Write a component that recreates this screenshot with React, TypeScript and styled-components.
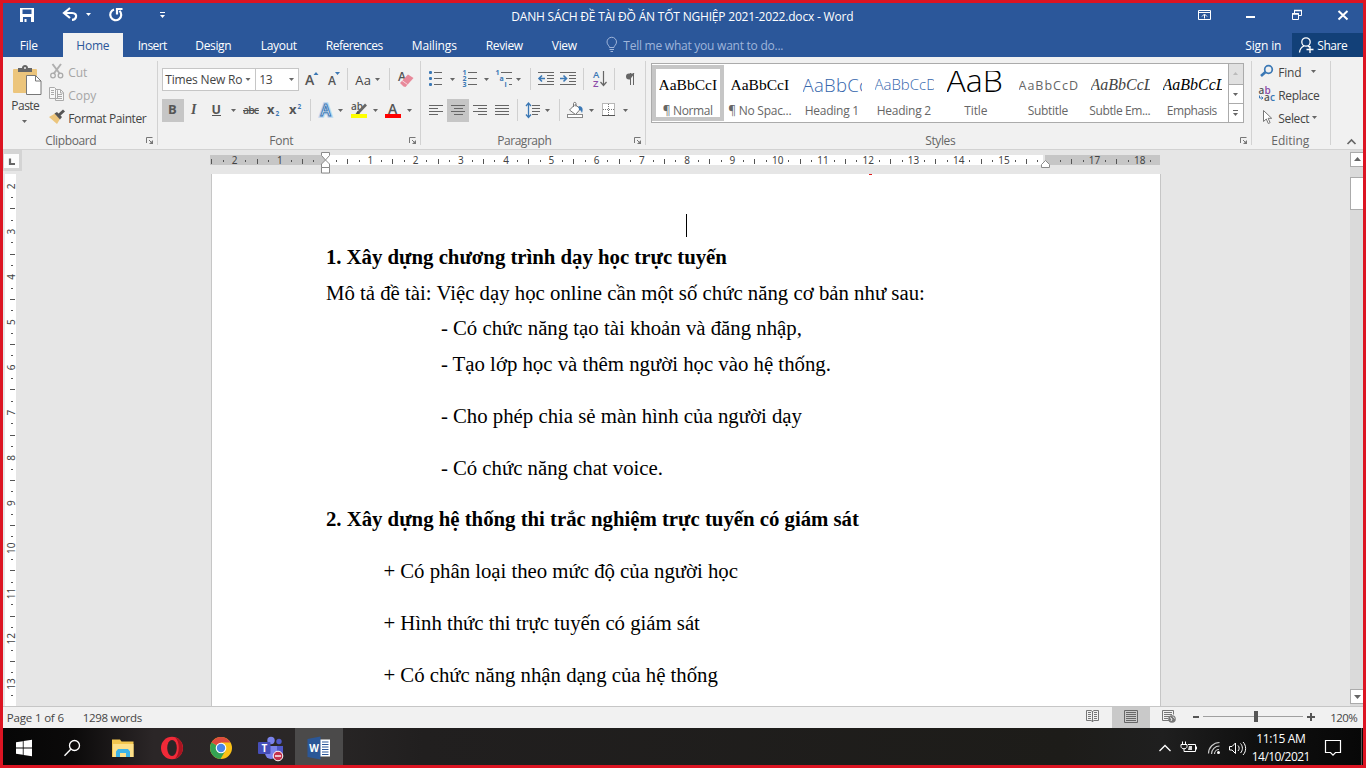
import React, { useLayoutEffect, useRef, useState } from "react";
import styled, { createGlobalStyle, css } from "styled-components";

const ui = `"Open Sans", "Noto Sans", sans-serif`;
const serif = `"Liberation Serif", serif`;
const GRAY = "#666";
const BLUE = "#3b78b5";

const Global = createGlobalStyle`
  * { box-sizing: border-box; }
  body { margin: 0; overflow: hidden; }
  svg { display: block; flex: none; overflow: visible; }
`;

const Screen = styled.div`
  width: 1366px;
  height: 768px;
  border: 3px solid #dc1422;
  display: flex;
  flex-direction: column;
  background: #e6e6e6;
  font: 12px ${ui};
  color: #444;
  overflow: hidden;
`;

/* ---------- shared parts ---------- */

type TextProps = {
  $w: number;
  $size?: number;
  $color?: string;
  $weight?: number;
  $family?: string;
  $italic?: boolean;
  $ml?: number;
};
const TextBox = styled.span<TextProps>`
  display: block;
  flex: none;
  width: ${(p) => p.$w}px;
  margin-left: ${(p) => p.$ml ?? 0}px;
  padding-left: 0.3px;
  white-space: pre;
  font-size: ${(p) => p.$size ?? 12}px;
  font-family: ${(p) => p.$family ?? ui};
  font-weight: ${(p) => p.$weight ?? 400};
  font-style: ${(p) => (p.$italic ? "italic" : "normal")};
  color: ${(p) => p.$color ?? "inherit"};
`;

/* A single line of text tracked so that it fills a known width. */
function Fit({ children, ...box }: TextProps & { children: string }) {
  const ref = useRef<HTMLSpanElement>(null);
  const [gap, setGap] = useState(0);
  useLayoutEffect(() => {
    if (!ref.current) return;
    ref.current.style.letterSpacing = "0px";
    const natural = ref.current.getBoundingClientRect().width;
    setGap((box.$w - 1 - natural) / children.length);
  }, [children, box.$w]);
  return (
    <TextBox {...box}>
      <span ref={ref} style={{ letterSpacing: `${gap.toFixed(3)}px` }}>{children}</span>
    </TextBox>
  );
}

type GProps = { x: number; y: number; w: number; h: number; children?: React.ReactNode };
function Glyph({ x, y, w, h, children }: GProps) {
  return (
    <svg width={w} height={h} viewBox={`${x} ${y} ${w} ${h}`} fill="none">
      {children}
    </svg>
  );
}

const Arrow = ({ x, y, c = GRAY }: { x: number; y: number; c?: string }) => (
  <path d={`M${x} ${y}h5l-2.5 3z`} fill={c} />
);
const Sep = ({ x, y }: { x: number; y: number }) => <path d={`M${x}.5 ${y}v22`} stroke="#d0d0d0" />;

const Spacer = styled.div`flex: 1;`;

/* ---------- title bar and tabs ---------- */

const TitleBar = styled.header`
  display: flex;
  align-items: center;
  height: 30px;
  flex: none;
  background: #2b579a;
  color: #fff;
`;
const TitleText = styled.div`
  display: flex;
  align-items: center;
  align-self: flex-start;
  height: 27px;
`;
const TabBar = styled.nav`
  display: flex;
  height: 24px;
  flex: none;
  background: #2b579a;
  color: #fff;
  align-items: stretch;
`;
const Tab = styled.div<{ $w: number; $active?: boolean; $mr?: number }>`
  width: ${(p) => p.$w}px;
  margin-right: ${(p) => p.$mr ?? 0}px;
  display: flex;
  flex: none;
  align-items: center;
  justify-content: center;
  ${(p) => p.$active && css`background: #f1f1f1; color: #2b579a;`}
`;
const ShareButton = styled.div`
  width: 71px;
  display: flex;
  align-items: center;
  background: #124078;
`;

/* ---------- ribbon ---------- */

const Ribbon = styled.section`
  display: flex;
  flex: none;
  height: 93px;
  padding-top: 4px;
  background: #f1f1f1;
  border-bottom: 1px solid #d2d2d2;
`;
const Group = styled.div<{ $w: number }>`
  width: ${(p) => p.$w}px;
  height: 88px;
  display: flex;
  flex: none;
  flex-direction: column;
`;
const Divider = styled.div`
  width: 1px;
  height: 84px;
  background: #d2d2d2;
`;
const GroupBody = styled.div<{ $column?: boolean; $pt?: number; $pl?: number; $gap?: number }>`
  height: 71px;
  display: flex;
  flex-direction: ${(p) => (p.$column ? "column" : "row")};
  padding-top: ${(p) => p.$pt ?? 0}px;
  padding-left: ${(p) => p.$pl ?? 0}px;
  gap: ${(p) => p.$gap ?? 0}px;
`;
const GroupFooter = styled.div`
  height: 18px;
  display: flex;
  align-items: center;
  color: #666;
`;
const Row = styled.div<{ $h?: number; $dim?: boolean }>`
  display: flex;
  flex: none;
  align-items: center;
  height: ${(p) => p.$h ?? 23}px;
  color: ${(p) => (p.$dim ? "#a6a6a6" : "#444")};
`;
const Column = styled.div`
  display: flex;
  flex-direction: column;
`;
const PasteButton = styled.div`
  width: 46px;
  display: flex;
  flex-direction: column;
`;
const Combo = styled.div<{ $w: number }>`
  width: ${(p) => p.$w}px;
  height: 23px;
  flex: none;
  display: flex;
  align-items: center;
  background: #fff;
  border: 1px solid #c6c6c6;
  & + & { border-left: 0; }
`;

const Gallery = styled.div`
  display: flex;
  width: 593px;
  height: 60px;
  border: 1px solid #ababab;
  background: #fff;
`;
const StyleCell = styled.div<{ $on?: boolean }>`
  width: 72px;
  height: 56px;
  margin-top: 1px;
  flex: none;
  border: 4px solid ${(p) => (p.$on ? "#c6c6c6" : "#fff")};
  padding: 2px 0 0 2px;
`;
const Preview = styled.div`
  width: 59px;
  height: 23px;
  margin: 0 0 8px 0.5px;
  overflow: hidden;
  display: flex;
  align-items: flex-end;
`;
const Sample = styled.span<{ $f: string; $s: number; $c: string; $lh: number; $i?: boolean; $wt?: number; $ls?: number }>`
  font: ${(p) => (p.$i ? "italic" : "normal")} ${(p) => p.$wt ?? 400} ${(p) => p.$s}px / ${(p) => p.$lh}px ${(p) => p.$f};
  letter-spacing: ${(p) => p.$ls ?? 0}px;
  color: ${(p) => p.$c};
  white-space: nowrap;
`;
const StyleName = styled.div`
  display: flex;
  justify-content: center;
  width: 60px;
  line-height: 17px;
  color: #666;
`;
const GalleryScroll = styled.div`
  display: flex;
  flex-direction: column;
  width: 15px;
  margin-left: auto;
  border-left: 1px solid #ababab;
`;
const ScrollCell = styled.div<{ $h: number; $off?: boolean }>`
  height: ${(p) => p.$h}px;
  background: ${(p) => (p.$off ? "#e1e1e1" : "#fff")};
  & + & { border-top: 1px solid #ababab; }
`;

/* ---------- work area ---------- */

const Work = styled.main`
  display: flex;
  height: 556px;
  flex: none;
`;
const LeftRail = styled.div`
  width: 208px;
  display: flex;
  flex-direction: column;
`;
const TabStop = styled.div`
  width: 19px;
  height: 21px;
  border: solid #d4d4d4;
  border-width: 4px 3px 3px 1px;
  background: #fcfcfc;
  margin-bottom: 3px;
`;
const Center = styled.div`
  width: 950px;
  display: flex;
  flex-direction: column;
`;
const Page = styled.article`
  position: relative;
  height: 532px;
  background: #fff;
  border: solid #c6c6c6;
  border-width: 0 1px;
  padding: 65px 0 0 113.6px;
  color: #000;
  overflow: hidden;
`;
const Line = styled.div<{ $indent?: number; $mt?: number }>`
  display: flex;
  height: 36px;
  line-height: 35.6px;
  padding-left: ${(p) => p.$indent ?? 0}px;
  margin-top: ${(p) => p.$mt ?? 0}px;
`;
const Caret = styled.div`
  position: absolute;
  left: 474px;
  top: 40px;
  width: 1px;
  height: 23px;
  background: #000;
`;
const RedMark = styled.div`
  position: absolute;
  left: 657px;
  top: 0;
  width: 3px;
  height: 1px;
  background: #e01b1b;
`;
const ScrollBar = styled.div`
  margin-left: auto;
  width: 13px;
  padding-top: 2px;
  display: flex;
  flex-direction: column;
  background: #dadada;
`;
const ScrollPart = styled.div<{ $h: number; $mt?: number }>`
  height: ${(p) => p.$h}px;
  margin-top: ${(p) => p.$mt ?? 0}px;
  background: #fff;
  border: 1px solid #ababab;
  border-right: 0;
`;
const ScrollEnd = styled.div`height: 2px;`;

/* ---------- status bar and taskbar ---------- */

const StatusBar = styled.footer`
  height: 22px;
  flex: none;
  display: flex;
  align-items: center;
  background: #f1f1f1;
  border-top: 1px solid #c6c6c6;
  font-size: 11px;
`;
const ViewButton = styled.div<{ $w: number; $on?: boolean }>`
  width: ${(p) => p.$w}px;
  background: ${(p) => (p.$on ? "#c9c9c9" : "transparent")};
`;
const Taskbar = styled.div`
  height: 37px;
  flex: none;
  display: flex;
  background: linear-gradient(90deg, #060606 0, #0b0a0a 70px, #2b2627 150px, #2a2727 300px, #211f1f 420px, #1d1c19 1060px, #1f1f1f 1160px, #101010 1250px, #070707 1360px);
  color: #fff;
`;
const TaskItem = styled.div<{ $w: number; $on?: boolean }>`
  width: ${(p) => p.$w}px;
  background: ${(p) => (p.$on ? "#4b4a4a" : "transparent")};
`;
const Clock = styled.div`
  width: 70px;
  display: flex;
  flex-direction: column;
  align-items: center;
  line-height: 18px;
  padding-top: 2px;
`;

/* ---------- rulers ---------- */

const STEP = 45.25;
function HorizontalRuler() {
  const marks: React.ReactNode[] = [];
  for (let q = -10; q <= 73; q++) {
    const exact = 325.2 + (q * STEP) / 4;
    const x = Math.round(exact - 0.6);
    if (q === 0 || q === 64) continue;
    if (q % 4 === 0) {
      marks.push(
        <text key={q} x={exact} y="164" textAnchor="middle" fontSize="10" fontFamily="Noto Sans, sans-serif" fill="#444">
          {Math.abs(q / 4)}
        </text>
      );
    } else if (q % 2 === 0) marks.push(<rect key={q} x={x} y="159" width="1" height="5" fill="#555" />);
    else marks.push(<rect key={q} x={x} y="160" width="1" height="2" fill="#555" />);
  }
  return (
    <Glyph x={211} y={150} w={950} h={24}>
      <rect x="210" y="155" width="950" height="10" fill="#c6c6c6" />
      <rect x="325" y="155" width="718" height="10" fill="#fff" />
      <rect x="1043" y="155" width="2" height="10" fill="#e6e6e6" />
      {marks}
      <path d="M321.5 152.5h8v3l-4 4.5-4-4.5zM321.5 167.5v-3.5l4-4 4 4v3.5zM321.5 167.5h8v5.5h-8z" fill="#fff" stroke="#8a8a8a" />
      <path d="M1041.500 167.500v-3l4-4 4 4v3z" fill="#fff" stroke="#8a8a8a" />
    </Glyph>
  );
}
function VerticalRuler() {
  const marks: React.ReactNode[] = [];
  for (let q = 0; q <= 45; q++) {
    const exact = 186.3 + (q * STEP) / 4;
    const y = Math.round(exact - 0.5);
    if (q % 4 === 0) {
      marks.push(
        <text key={q} transform={`translate(15 ${exact}) rotate(-90)`} textAnchor="middle" fontSize="10" fontFamily="Noto Sans, sans-serif" fill="#444">
          {q / 4 + 2}
        </text>
      );
    } else if (q % 2 === 0) marks.push(<rect key={q} x="10" y={y} width="5" height="1" fill="#555" />);
    else marks.push(<rect key={q} x="11" y={y} width="2" height="1" fill="#555" />);
  }
  return (
    <Glyph x={3} y={174} w={208} h={532}>
      <rect x="5" y="174" width="11" height="532" fill="#fff" />
      {marks}
    </Glyph>
  );
}

/* ---------- small drawings ---------- */

const Launcher = ({ x }: { x: number }) => (
  <Glyph x={x} y={137} w={8} h={8}>
    <path d={`M${x + 0.5} 144v-5.500h6M${x + 3} 141l3 3`} stroke="#777" />
    <path d={`M${x + 7} 141v4h-4z`} fill="#777" />
  </Glyph>
);
const lines = (rows: [number, number, number][], c = GRAY) =>
  rows.map(([x, y, w]) => <rect key={`${x}-${y}`} x={x} y={y} width={w} height="1" fill={c} />);

const Gap = styled.div<{ $w: number }>`width: ${(p) => p.$w}px; flex: none;`;

function GroupLabel({ left, w, launcher, children }: { left: number; w: number; launcher?: number; children: string }) {
  return (
    <GroupFooter>
      <Fit $w={w} $ml={left}>{children}</Fit>
      {launcher && (<><Spacer /><Launcher x={launcher} /><Gap $w={3} /></>)}
    </GroupFooter>
  );
}

/* ---------- sections ---------- */

function Header() {
  return (
    <>
      <TitleBar>
        <Glyph x={3} y={3} w={53} h={30}>
          <path fillRule="evenodd" d="M20 8h14v14H20zM22.500 9.500v4.500h9v-4.500zM23 17v5h1.500v-3h2v3h4.500v-5z" fill="#fff" />
        </Glyph>
        <Glyph x={56} y={3} w={44} h={30}>
          <path d="M70 8l-6 5 6 5" stroke="#fff" strokeWidth="2.200" />
          <path d="M65 13h7c3.500 0 4.500 2 4 4-.4 2-2 2.800-4 2.800" stroke="#fff" strokeWidth="2.200" />
          <Arrow x={86} y={13} c="#fff" />
        </Glyph>
        <Glyph x={100} y={3} w={50} h={30}>
          <path d="M114 9.500a5.500 5.500 0 1 0 5.500 1.200" stroke="#fff" strokeWidth="2.200" />
          <path d="M122.500 9h-5.500v5.500" stroke="#fff" strokeWidth="2.200" />
        </Glyph>
        <Glyph x={150} y={3} w={361} h={30}>
          <rect x="160" y="12" width="5" height="1" fill="#fff" />
          <Arrow x={160} y={15} c="#fff" />
        </Glyph>
        <TitleText><Fit $w={343}>DANH SÁCH ĐỀ TÀI ĐỒ ÁN TỐT NGHIỆP 2021-2022.docx - Word</Fit></TitleText>
        <Spacer />
        <Glyph x={1188} y={3} w={175} h={30}>
          <path d="M1198.500 10.500h12v9h-12zM1198 12.500h13M1204.500 18.500v-4M1202 16.500l2.500-2.500 2.500 2.500" stroke="#fff" />
          <rect x="1246" y="16" width="9" height="2" fill="#fff" />
          <path d="M1294.500 13v-2.500h7v5h-2.500" stroke="#fff" />
          <path d="M1294 10.500h8M1292 14h7" stroke="#fff" strokeWidth="1.500" />
          <path d="M1292.500 13.500h6v6h-6z" stroke="#fff" />
          <path d="M1338.500 11l9 8.500M1347.500 11l-9 8.500" stroke="#fff" strokeWidth="2" />
        </Glyph>
      </TitleBar>
      <TabBar>
        <Tab $w={52} $mr={8}><Fit $w={19}>File</Fit></Tab>
        <Tab $w={60} $active><Fit $w={34}>Home</Fit></Tab>
        <Tab $w={59}><Fit $w={30}>Insert</Fit></Tab>
        <Tab $w={63}><Fit $w={37}>Design</Fit></Tab>
        <Tab $w={68}><Fit $w={37}>Layout</Fit></Tab>
        <Tab $w={83}><Fit $w={58}>References</Fit></Tab>
        <Tab $w={77}><Fit $w={46}>Mailings</Fit></Tab>
        <Tab $w={63}><Fit $w={38}>Review</Fit></Tab>
        <Tab $w={57}><Fit $w={26}>View</Fit></Tab>
        <Glyph x={593} y={33} w={30} h={24}>
          <path d="M609.500 47.500c0-2-2.500-2.500-2.500-5.500a4.700 4.700 0 0 1 9.500 0c0 3-2.500 3.500-2.500 5.500zM609.500 49.500h4.500M610.500 51.500h2.500" stroke="#9fb5da" />
        </Glyph>
        <Tab $w={161}><Fit $w={161} $color="#9fb5da">Tell me what you want to do...</Fit></Tab>
        <Spacer />
        <Tab $w={37} $mr={10}><Fit $w={37}>Sign in</Fit></Tab>
        <ShareButton>
          <Glyph x={1292} y={33} w={25} h={24}>
            <circle cx="1306" cy="42" r="4.200" stroke="#fff" strokeWidth="1.300" />
            <path d="M1299.500 52.500c.3-3.500 2-5.500 4.500-6.500M1308 46l2 1.500M1306.500 49.500h7M1310 46v7" stroke="#fff" strokeWidth="1.300" />
          </Glyph>
          <Fit $w={31}>Share</Fit>
        </ShareButton>
      </TabBar>
    </>
  );
}

function ClipboardGroup() {
  return (
    <Group $w={154}>
      <GroupBody>
        <PasteButton>
          <Glyph x={3} y={61} w={46} h={36}>
            <rect x="13" y="69" width="24" height="24" rx="1" fill="#ecc57c" />
            <path d="M18 72v-4h4c0-1.600 1-3 3-3s3 1.400 3 3h4v4z" fill="#666" />
            <circle cx="25" cy="68" r="1" fill="#f1f1f1" />
            <path d="M26.500 75.500h9l5.500 5.500v13.500H26.500z" fill="#fff" stroke="#777" />
            <path d="M35.500 75.500v5.500h5.500" stroke="#777" />
          </Glyph>
          <Row $h={17}><Fit $w={29} $ml={8}>Paste</Fit></Row>
          <Glyph x={3} y={114} w={40} h={10}><Arrow x={22} y={120} /></Glyph>
        </PasteButton>
        <Column>
          <Row $dim>
            <Glyph x={49} y={61} w={18} h={23}>
              <path d="M52.500 64l7.500 10M61 64l-7.500 10" stroke="#b0b0b0" strokeWidth="2" />
              <circle cx="53" cy="75.500" r="2.300" stroke="#aaa" strokeWidth="1.300" />
              <circle cx="60.500" cy="75.500" r="2.300" stroke="#aaa" strokeWidth="1.300" />
            </Glyph>
            <Fit $w={20} $ml={1}>Cut</Fit>
          </Row>
          <Row $dim>
            <Glyph x={49} y={84} w={18} h={23}>
              <path d="M49.500 87.500h5l3 3v8h-8zM55.500 89.500h5l3 3v8h-8z" fill="#f7f7f7" stroke="#aaa" />
              <path d="M51 90.500h3M51 92.500h3M51 94.500h3M57 94.500h5M57 96.500h5M57 98.500h5M60.500 90v3h3" stroke="#aaa" />
            </Glyph>
            <Fit $w={29} $ml={1}>Copy</Fit>
          </Row>
          <Row>
            <Glyph x={49} y={107} w={18} h={23}>
              <path d="M49 117l6-3.500 5 5.500-3 5z" fill="#ecc57c" />
              <path d="M54.500 113.500l2.500-1.500 5 5-2 2.500z" fill="#555" />
              <path d="M59 115l5-4.500" stroke="#555" strokeWidth="3" />
            </Glyph>
            <Fit $w={79} $ml={1}>Format Painter</Fit>
          </Row>
        </Column>
      </GroupBody>
      <GroupLabel left={42} w={52} launcher={146}>Clipboard</GroupLabel>
    </Group>
  );
}

function FontGroup() {
  return (
    <Group $w={262}>
      <GroupBody $column $pt={7} $pl={4} $gap={8}>
        <Row>
          <Combo $w={94}>
            <Fit $w={78} $ml={2}>Times New Ro</Fit>
            <Glyph x={243} y={70} w={12} h={19}><Arrow x={245.500} y={78} /></Glyph>
          </Combo>
          <Combo $w={43}>
            <Fit $w={14} $ml={3}>13</Fit>
            <Glyph x={273} y={70} w={20} h={19}><Arrow x={289} y={78} /></Glyph>
          </Combo>
          <Glyph x={299} y={68} w={53} h={23}>
            <text x="305" y="84.500" fontSize="14" fontFamily={ui} fontWeight="600" fill="#555">A</text>
            <path d="M313.500 75l2.500-3 2.500 3z" fill={BLUE} />
            <text x="328" y="84.500" fontSize="12" fontFamily={ui} fontWeight="600" fill="#555">A</text>
            <path d="M335 72h5l-2.500 3z" fill={BLUE} />
            <Sep x={347} y={68} />
          </Glyph>
          <Fit $w={17} $ml={3} $size={13}>Aa</Fit>
          <Glyph x={372} y={68} w={48} h={23}>
            <Arrow x={375} y={78} />
            <Sep x={389} y={68} />
            <text x="398" y="81" fontSize="12" fontFamily={ui} fontWeight="600" fill="#555">A</text>
            <path d="M400 83l8-8.500 5.500 3.500-8 9-2-.5z" fill="#e8899a" />
            <path d="M402 80.500l5.500 4" stroke="#f6d5db" />
          </Glyph>
        </Row>
        <Row>
          <Glyph x={162} y={99} w={258} h={23}>
            <rect x="162" y="99" width="22" height="23" fill="#c6c6c6" />
            <g fontFamily={ui} fill="#555">
              <text x="168" y="114" fontSize="13" fontWeight="700">B</text>
              <text x="191" y="114" fontSize="14" fontWeight="700" fontStyle="italic" fontFamily={serif}>I</text>
              <text x="211.500" y="113.500" fontSize="12.500" fontWeight="700">U</text>
              <rect x="212" y="115" width="9" height="1" />
              <text x="243" y="114" fontSize="10.500" fontWeight="600" textLength="16">abc</text>
              <rect x="243" y="110" width="16" height="1" />
              <text x="267" y="114" fontSize="13" fontWeight="700">x</text>
              <text x="275.500" y="116" fontSize="6.500" fontWeight="700" fill={BLUE}>2</text>
              <text x="289" y="114" fontSize="13" fontWeight="700">x</text>
              <text x="297.500" y="109" fontSize="6.500" fontWeight="700" fill={BLUE}>2</text>
              <text x="320.500" y="115.500" fontSize="15.500" fontWeight="600" fill="#fff" stroke="#bcd6ef" strokeWidth="3.500">A</text>
              <text x="320.500" y="115.500" fontSize="15.500" fontWeight="600" fill="#fff" stroke={BLUE} strokeWidth="1">A</text>
              <text x="351" y="110" fontSize="10" fontWeight="600">ab</text>
              <path d="M358 113l8-8.500" stroke="#666" strokeWidth="2.600" />
              <path d="M355 115l2.500-4 2.500 2.500z" />
              <rect x="351" y="114" width="16" height="4" fill="#ff0" />
              <text x="388" y="114" fontSize="14" fontWeight="600">A</text>
              <rect x="385" y="114" width="16" height="4" fill="#f00" />
            </g>
            <Arrow x={231} y={109} />
            <Sep x={310} y={99} />
            <Arrow x={338} y={109} />
            <Arrow x={373} y={109} />
            <Arrow x={407} y={109} />
          </Glyph>
        </Row>
      </GroupBody>
      <GroupLabel left={111} w={25} launcher={409}>Font</GroupLabel>
    </Group>
  );
}

function ParagraphGroup() {
  return (
    <Group $w={224}>
      <GroupBody $column $pt={7} $pl={4} $gap={8}>
        <Row>
          <Glyph x={425} y={68} w={220} h={23}>
            {[71, 77, 83].map((y) => <rect key={y} x="429" y={y} width="3" height="3" rx="1" fill={BLUE} />)}
            {lines([[434, 72, 8], [434, 78, 8], [434, 84, 8], [468, 72, 9], [468, 78, 9], [468, 84, 9], [501, 72, 11], [506, 78, 6], [509, 84, 3]])}
            <g fontFamily={ui} fontSize="7" fontWeight="700" fill={BLUE}>
              <text x="462.500" y="75">1</text><text x="462.500" y="81">2</text><text x="462.500" y="87">3</text>
              <text x="495.500" y="75">1</text><text x="499.500" y="81">a</text><text x="504.500" y="87">i</text>
            </g>
            <Arrow x={450} y={78} /><Arrow x={484} y={78} /><Arrow x={516} y={78} />
            <Sep x={530} y={68} />
            {lines([[538, 72, 16], [547, 75, 7], [547, 78, 7], [547, 81, 7], [538, 84, 16], [560, 72, 16], [569, 75, 7], [569, 78, 7], [569, 81, 7], [560, 84, 16]])}
            <path d="M545 78.500h-6M542 75.500l-3 3 3 3M560 78.500h6M563.500 75.500l3 3-3 3" stroke={BLUE} strokeWidth="1.600" />
            <Sep x={583} y={68} />
            <g fontFamily={ui} fontSize="9.500" fontWeight="600">
              <text x="593" y="78" fill={BLUE}>A</text><text x="593" y="87" fill="#8a4ba8">Z</text>
            </g>
            <path d="M603.500 71v14M600.500 82l3 3.500 3-3.500" stroke="#666" strokeWidth="1.200" />
            <Sep x={614} y={68} />
            <path d="M634.500 73.500h-5.500a3 3 0 0 0 0 6h1z" fill="#666" />
            <path d="M630.500 73v12M633.500 73v12" stroke="#666" />
          </Glyph>
        </Row>
        <Row>
          <Glyph x={425} y={99} w={220} h={23}>
            <rect x="447" y="99" width="22" height="23" fill="#c6c6c6" />
            {[0, 1, 2, 3].map((i) => (
              <React.Fragment key={i}>
                {lines([[429, 105 + i * 3, i % 2 ? 9 : 14], [i % 2 ? 454 : 451, 105 + i * 3, i % 2 ? 9 : 14], [i % 2 ? 478 : 473, 105 + i * 3, i % 2 ? 9 : 14], [495, 105 + i * 3, 14]])}
              </React.Fragment>
            ))}
            {lines([[532, 105, 8], [532, 108, 8], [532, 111, 8], [532, 114, 6]])}
            <Sep x={517} y={99} />
            <path d="M528.500 103.500v14M526 106l2.500-3 2.500 3M526 114.500l2.500 3 2.500-3" stroke={BLUE} strokeWidth="1.300" />
            <Arrow x={545} y={109} />
            <Sep x={559} y={99} />
            <path d="M575 104.500l-5.500 5.500 6 4.500 5-5.500zM573.500 107v-3.500c0-1.500 2.500-1.500 2.500 0v3" fill="#fff" stroke="#777" />
            <path d="M578.500 106c4 0 5 3 3.500 7-1-2.500-2-3-3-3z" fill={BLUE} />
            <rect x="567.500" y="114.500" width="15" height="3" fill="#fff" stroke="#888" />
            <Arrow x={589} y={109} />
            <rect x="602.500" y="103.500" width="12" height="12" fill="#fff" stroke="#777" strokeDasharray="1 1" />
            <path d="M608.500 104v12M603 109.500h12" stroke="#777" strokeDasharray="1 1" />
            <path d="M602 115.500h13" stroke="#555" />
            <Arrow x={623} y={109} />
          </Glyph>
        </Row>
      </GroupBody>
      <GroupLabel left={76} w={55} launcher={634}>Paragraph</GroupLabel>
    </Group>
  );
}

const styleCells: { name: string; w: number; s: React.ComponentProps<typeof Sample>; text: string }[] = [
  { name: "¶ Normal", w: 51, text: "AaBbCcI", s: { $f: serif, $s: 15.5, $c: "#000", $lh: 18 } },
  { name: "¶ No Spac...", w: 64, text: "AaBbCcI", s: { $f: serif, $s: 15.5, $c: "#000", $lh: 18 } },
  { name: "Heading 1", w: 55, text: "AaBbCcD", s: { $f: ui, $s: 18.5, $c: "#3566ac", $lh: 19, $wt: 300, $ls: 0.3 } },
  { name: "Heading 2", w: 55, text: "AaBbCcD", s: { $f: ui, $s: 15, $c: "#3566ac", $lh: 20, $wt: 300 } },
  { name: "Title", w: 24, text: "AaB", s: { $f: ui, $s: 32, $c: "#000", $lh: 28, $wt: 300 } },
  { name: "Subtitle", w: 41, text: "AaBbCcD", s: { $f: ui, $s: 12.5, $c: "#666", $lh: 17, $ls: 1 } },
  { name: "Subtle Em...", w: 62, text: "AaBbCcL", s: { $f: serif, $s: 16, $c: "#444", $lh: 18, $i: true } },
  { name: "Emphasis", w: 51, text: "AaBbCcL", s: { $f: serif, $s: 16, $c: "#000", $lh: 18, $i: true } },
];

function StylesGroup() {
  return (
    <Group $w={605}>
      <GroupBody $pt={2} $pl={5}>
        <Gallery>
          {styleCells.map((c, i) => (
            <StyleCell key={c.name} $on={i === 0}>
              <Preview><Sample {...c.s}>{c.text}</Sample></Preview>
              <StyleName><Fit $w={c.w}>{c.name}</Fit></StyleName>
            </StyleCell>
          ))}
          <GalleryScroll>
            <ScrollCell $h={20} $off><Glyph x={1230} y={64} w={14} h={18}><path d="M1234 75h5l-2.500-3z" fill="#bbb" /></Glyph></ScrollCell>
            <ScrollCell $h={19}><Glyph x={1230} y={85} w={14} h={18}><Arrow x={1234} y={93} /></Glyph></ScrollCell>
            <ScrollCell $h={19}><Glyph x={1230} y={104} w={14} h={18}><rect x="1234" y="110" width="5" height="1" fill="#666" /><Arrow x={1234} y={113} /></Glyph></ScrollCell>
          </GalleryScroll>
        </Gallery>
      </GroupBody>
      <GroupLabel left={279} w={31} launcher={1240}>Styles</GroupLabel>
    </Group>
  );
}

function EditingGroup() {
  return (
    <Group $w={78}>
      <GroupBody $column>
        <Row>
          <Glyph x={1252} y={61} w={26} h={23}>
            <circle cx="1268.500" cy="69.500" r="3.800" stroke={BLUE} strokeWidth="1.700" />
            <path d="M1265.500 72l-4.500 4" stroke={BLUE} strokeWidth="2.600" />
          </Glyph>
          <Fit $w={24}>Find</Fit>
          <Glyph x={1302} y={61} w={24} h={23}><Arrow x={1311} y={70} /></Glyph>
        </Row>
        <Row>
          <Glyph x={1252} y={84} w={26} h={23}>
            <g fontFamily={ui} fontSize="10" fontWeight="600">
              <text x="1258.500" y="94" fill="#555">a</text><text x="1264.500" y="94" fill="#8a4ba8">b</text>
              <text x="1264" y="101" fill="#555">a</text><text x="1270" y="101" fill={BLUE}>c</text>
            </g>
            <path d="M1259.500 95.500v2.500h3M1261.500 96.500l1.500 1.500-1.500 1.500" stroke={BLUE} />
          </Glyph>
          <Fit $w={42}>Replace</Fit>
        </Row>
        <Row>
          <Glyph x={1252} y={107} w={26} h={23}>
            <path d="M1263.500 110.500v11l2.800-2.500 2 4.500 1.800-.8-2-4.400h3.600z" fill="#fff" stroke="#777" />
          </Glyph>
          <Fit $w={32}>Select</Fit>
          <Glyph x={1310} y={107} w={16} h={23}><Arrow x={1312} y={116} /></Glyph>
        </Row>
      </GroupBody>
      <GroupLabel left={19} w={39}>Editing</GroupLabel>
    </Group>
  );
}

type DocLine = { t: string; w: number; indent?: number; mt?: number; bold?: boolean };
const doc: DocLine[] = [
  { t: "1. Xây dựng chương trình dạy học trực tuyến", w: 402, bold: true },
  { t: "Mô tả đề tài: Việc dạy học online cần một số chức năng cơ bản như sau:", w: 600 },
  { t: "- Có chức năng tạo tài khoản và đăng nhập,", w: 362, indent: 115, mt: -1 },
  { t: "- Tạo lớp học và thêm người học vào hệ thống.", w: 391, indent: 115 },
  { t: "- Cho phép chia sẻ màn hình của người dạy", w: 362, indent: 115, mt: 16 },
  { t: "- Có chức năng chat voice.", w: 223, indent: 115, mt: 16 },
  { t: "2. Xây dựng hệ thống thi trắc nghiệm trực tuyến có giám sát", w: 534, mt: 15, bold: true },
  { t: "+ Có phân loại theo mức độ của người học", w: 355.5, indent: 57.5, mt: 16 },
  { t: "+ Hình thức thi trực tuyến có giám sát", w: 317.5, indent: 57.5, mt: 16 },
  { t: "+ Có chức năng nhận dạng của hệ thống", w: 335.5, indent: 57.5, mt: 16 },
];

function WorkArea() {
  return (
    <Work>
      <LeftRail>
        <TabStop>
          <Glyph x={4} y={154} w={14} h={14}><path d="M10 158.500v5.500h5" stroke="#666" strokeWidth="2.200" /></Glyph>
        </TabStop>
        <VerticalRuler />
      </LeftRail>
      <Center>
        <HorizontalRuler />
        <Page>
          <Caret />
          <RedMark />
          {doc.map((l) => (
            <Line key={l.t} $indent={l.indent} $mt={l.mt}>
              <Fit $w={l.w} $size={20.8} $family={serif} $weight={l.bold ? 700 : 400}>{l.t}</Fit>
            </Line>
          ))}
        </Page>
      </Center>
      <ScrollBar>
        <ScrollPart $h={15}><Glyph x={1351} y={153} w={12} h={13}><path d="M1354 161h7l-3.500-4z" fill="#666" /></Glyph></ScrollPart>
        <ScrollPart $h={33} $mt={10} />
        <Spacer />
        <ScrollPart $h={15}><Glyph x={1351} y={690} w={12} h={13}><path d="M1354 695h7l-3.500 4z" fill="#666" /></Glyph></ScrollPart>
        <ScrollEnd />
      </ScrollBar>
    </Work>
  );
}

function Status() {
  return (
    <StatusBar>
      <Fit $w={58} $ml={3.5} $size={11.5}>Page 1 of 6</Fit>
      <Fit $w={60} $ml={18} $size={11.5}>1298 words</Fit>
      <Spacer />
      <ViewButton $w={38}>
        <Glyph x={1074} y={707} w={38} h={21}>
          <path d="M1086.500 710.500h4.500l1.500 1 1.500-1h4.500v10h-4.500l-1.500 1-1.500-1h-4.500zM1092.500 711v11" stroke="#777" />
          <path d="M1088 712.500h3M1088 714.500h3M1088 716.500h3M1088 718.500h3M1094 712.500h3M1094 714.500h3M1094 716.500h3M1094 718.500h3" stroke="#777" />
        </Glyph>
      </ViewButton>
      <ViewButton $w={38} $on>
        <Glyph x={1112} y={707} w={38} h={21}>
          <path d="M1124.500 710.500h13v12h-13zM1126 712.500h10M1126 714.500h10M1126 716.500h10M1126 718.500h10M1126 720.500h10" stroke="#666" />
        </Glyph>
      </ViewButton>
      <Glyph x={1150} y={707} w={180} h={21}>
        <path d="M1169 720.500h-6.500v-10h11v4M1164 712.500h8M1164 714.500h8M1164 716.500h5M1164 718.500h4" stroke="#777" />
        <circle cx="1172" cy="719" r="3.800" fill="#777" />
        <path d="M1170 717.500l2 1.500-1 2M1173 716.500l1.500 2" stroke="#f1f1f1" />
        <rect x="1193" y="716" width="6" height="2" fill="#555" />
        <rect x="1203" y="716" width="100" height="1" fill="#a0a0a0" />
        <rect x="1254" y="711" width="4" height="11" fill="#555" />
        <path d="M1307 717h8M1311 713v8" stroke="#555" strokeWidth="2" />
      </Glyph>
      <Fit $w={28} $size={11.5}>120%</Fit>
      <Gap $w={5} />
    </StatusBar>
  );
}

function TaskbarRow() {
  return (
    <Taskbar>
      <Glyph x={3} y={728} w={292} h={37}>
        <path d="M16 742.200l6.800-1v6.300H16zM23.600 741.100l8.400-1.300v7.700h-8.400zM16 748.400h6.800v6.400l-6.800-1zM23.600 748.400H32v7.800l-8.400-1.300z" fill="#fff" />
        <circle cx="74.500" cy="745.500" r="5" stroke="#fff" strokeWidth="1.300" />
        <path d="M70.800 749.300l-6.300 6.400" stroke="#fff" strokeWidth="1.400" />
        <path d="M112 739.500h8l1.500 2h12v15.500H112z" fill="#f3c64f" />
        <path d="M113 744h20.500v13H113z" fill="#fde08a" />
        <path d="M116 757v-5.500l2-2.500h10l2 2.500v5.500h-4v-4h-6v4z" fill="#3db3e8" />
        <ellipse cx="172" cy="748" rx="11" ry="11.200" fill="#f02a38" />
        <path d="M175 737.300a11.200 11.200 0 0 1 0 21.400c5-5 5-17 0-21.400z" fill="#a81420" />
        <ellipse cx="172" cy="748" rx="4.800" ry="8" fill="#2a2627" />
        <circle cx="221" cy="748" r="11" fill="#fbc116" />
        <path d="M221 748L211.500 742.500A11 11 0 0 1 230.500 742.500H221z" fill="#dd4b3e" />
        <path d="M221 748L211.500 742.500A11 11 0 0 0 220.500 759l5-8.500z" fill="#34a353" />
        <circle cx="221" cy="748" r="5.300" fill="#fff" />
        <circle cx="221" cy="748" r="4.200" fill="#4a86e8" />
        <circle cx="271" cy="740.500" r="3.700" fill="#7b83eb" />
        <circle cx="279" cy="741.500" r="2.700" fill="#5059c9" />
        <path d="M275 746h8v7a5 5 0 0 1-8 4z" fill="#5059c9" />
        <path d="M265 746h12v7a6 6 0 0 1-12 0z" fill="#7b83eb" />
        <rect x="258" y="742" width="12.500" height="12" rx="1" fill="#464eb8" />
        <text x="264.300" y="751.500" textAnchor="middle" fontFamily={ui} fontSize="10" fontWeight="700" fill="#fff">T</text>
        <circle cx="278" cy="756" r="4.800" fill="#c4314b" stroke="#fff" />
        <rect x="275" y="755.300" width="6" height="1.400" fill="#fff" />
      </Glyph>
      <TaskItem $w={48} $on>
        <Glyph x={295} y={728} w={48} h={37}>
          <rect x="319" y="739.500" width="11" height="17" fill="#fff" />
          <path d="M322 742h6.500M322 744.500h6.500M322 747h6.500M322 749.500h6.500M322 752h6.500M322 754.500h6.500" stroke="#2b579a" />
          <path d="M307.500 739l13-2.500v23l-13-2.500z" fill="#2b5797" />
          <text x="314" y="752" textAnchor="middle" fontFamily={ui} fontSize="10" fontWeight="700" fill="#fff">W</text>
        </Glyph>
      </TaskItem>
      <Spacer />
      <Glyph x={1150} y={728} w={96} h={37}>
        <path d="M1159.500 751l5.500-5.500 5.500 5.500" stroke="#fff" strokeWidth="1.300" />
        <path d="M1188 744.500h7.500v7h-8.500M1196.500 746.500v3" stroke="#fff" />
        <path d="M1189 746h3v4h-4z" fill="#ddd" />
        <path d="M1182.500 741.500v3M1185.500 741.500v3M1181 744.500h6v2c0 3-6 3-6 0zM1184 749v2.500h3.500" stroke="#fff" />
        <circle cx="1218.500" cy="752.500" r="1.500" fill="#fff" />
        <path d="M1208.500 753.500c0-6 5-11 11-11M1211.500 754c0-4.500 3.500-8 8-8M1214.500 754c0-2.500 2-4.500 4.500-4.500" stroke="#ccc" strokeWidth="1.200" />
        <path d="M1229.500 746.500h2.500l3.500-3.500v10.500l-3.500-3.500h-2.500zM1238 745.500c1.500 1.500 1.500 4 0 5.500M1240.500 743.500c2.500 2.500 2.500 7 0 9.500M1243 742c3.500 3.500 3.500 9.500 0 13" stroke="#fff" />
      </Glyph>
      <Clock>
        <Fit $w={50}>11:15 AM</Fit>
        <Fit $w={59}>14/10/2021</Fit>
      </Clock>
      <Glyph x={1316} y={728} w={47} h={37}>
        <path d="M1325.500 740.500h15v12h-5l-2.500 2.700-2.500-2.700h-5z" stroke="#fff" strokeWidth="1.200" />
        <rect x="1361" y="728" width="1" height="37" fill="#555" />
      </Glyph>
    </Taskbar>
  );
}

export default function App() {
  return (
    <Screen>
      <Global />
      <Header />
      <Ribbon>
        <ClipboardGroup />
        <Divider />
        <FontGroup />
        <Divider />
        <ParagraphGroup />
        <Divider />
        <StylesGroup />
        <Divider />
        <EditingGroup />
        <Divider />
        <Glyph x={1331} y={61} w={32} h={88}>
          <path d="M1347.500 144l4-4 4 4" stroke="#666" strokeWidth="1.700" />
        </Glyph>
      </Ribbon>
      <WorkArea />
      <Status />
      <TaskbarRow />
    </Screen>
  );
}
